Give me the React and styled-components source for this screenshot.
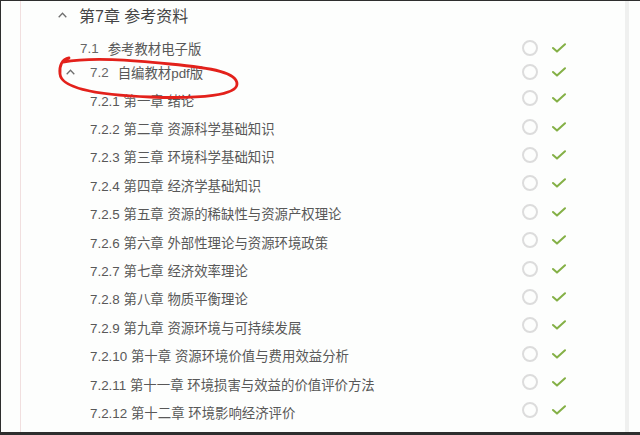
import React from 'react';
import styled, { createGlobalStyle } from 'styled-components';

const GlobalStyle = createGlobalStyle`
  html, body {
    margin: 0;
    padding: 0;
    background: #fdfefd;
  }
  * {
    box-sizing: border-box;
  }
`;

const chapters = [
  ['7.2.1', '第一章', '绪论'],
  ['7.2.2', '第二章', '资源科学基础知识'],
  ['7.2.3', '第三章', '环境科学基础知识'],
  ['7.2.4', '第四章', '经济学基础知识'],
  ['7.2.5', '第五章', '资源的稀缺性与资源产权理论'],
  ['7.2.6', '第六章', '外部性理论与资源环境政策'],
  ['7.2.7', '第七章', '经济效率理论'],
  ['7.2.8', '第八章', '物质平衡理论'],
  ['7.2.9', '第九章', '资源环境与可持续发展'],
  ['7.2.10', '第十章', '资源环境价值与费用效益分析'],
  ['7.2.11', '第十一章', '环境损害与效益的价值评价方法'],
  ['7.2.12', '第十二章', '环境影响经济评价'],
];

const Chevron = () => (
  <ChevronIcon viewBox="0 0 9 6">
    <polyline points="0.7,5.2 4.5,1.2 8.3,5.2" />
  </ChevronIcon>
);

const Status = () => (
  <StatusGroup>
    <Ring />
    <Check viewBox="0 0 14 10">
      <polyline points="1,5 5,8.6 13,1.2" />
    </Check>
  </StatusGroup>
);

export default function App() {
  return (
    <Frame>
      <GlobalStyle />
      <Gutter />
      <Main>
        <Heading>
          <Chevron />
          <span>第7章 参考资料</span>
        </Heading>

        <Row $indent={59} $height={24} $gap={7}>
          <Label>
            <Num $wide>7.1</Num>参考教材电子版
          </Label>
          <Status />
        </Row>

        <Row $indent={45} $height={24}>
          <Label>
            <Chevron />
            <Num $wide>7.2</Num>自编教材pdf版
          </Label>
          <Status />
        </Row>

        {chapters.map(([num, chap, title]) => (
          <Row key={num} $indent={69} $height={28.4}>
            <Label $drop>
              {num} {chap} {title}
            </Label>
            <Status />
          </Row>
        ))}
      </Main>
      <Scrollbar />

      <Scribble viewBox="0 0 640 435">
        <path d="M 69 58 C 62 59, 59 66, 60 74 C 61 87, 92 95, 150 97 C 202 99, 237 95, 237 84 C 237 73, 214 68, 170 64 C 130 60, 92 57, 63 62" />
      </Scribble>
    </Frame>
  );
}

const Frame = styled.div`
  position: relative;
  display: flex;
  width: 640px;
  height: 435px;
  overflow: hidden;
  border-top: 1px solid #2e2e2e;
  border-left: 1px solid #2e2e2e;
  border-bottom: 3px solid #2e2e2e;
  background: #fdfefd;
  font-family: 'Liberation Sans', 'Noto Sans CJK SC', sans-serif;
`;

const Gutter = styled.div`
  width: 20px;
  flex: none;
  border-right: 1px solid #f1dfdf;
`;

const Main = styled.div`
  flex: 1;
  display: flex;
  flex-direction: column;
`;

const Scrollbar = styled.div`
  width: 4px;
  flex: none;
  margin-right: 11px;
  background: #eff0ef;
`;

const Heading = styled.div`
  display: flex;
  align-items: center;
  gap: 12px;
  height: 28px;
  padding-left: 37px;
  font-size: 16px;
  color: #444;
`;

const ChevronIcon = styled.svg`
  width: 9px;
  height: 6px;
  flex: none;
  fill: none;
  stroke: #6f6f6f;
  stroke-width: 1.3;
`;

const Row = styled.div`
  display: flex;
  align-items: center;
  height: ${p => p.$height}px;
  margin-top: ${p => p.$gap || 0}px;
  padding-left: ${p => p.$indent}px;
  padding-right: 59px;
`;

const Label = styled.div`
  flex: 1;
  display: flex;
  align-items: center;
  white-space: pre;
  font-size: 13.4px;
  color: #585858;
  padding-top: ${p => (p.$drop ? 3 : 0)}px;

  ${ChevronIcon} {
    margin-right: 15px;
  }
`;

const Num = styled.span`
  color: #666;
  margin-right: ${p => (p.$wide ? 9 : 4)}px;
`;

const StatusGroup = styled.div`
  display: flex;
  align-items: center;
  gap: 14px;
`;

const Ring = styled.span`
  width: 16px;
  height: 16px;
  border-radius: 50%;
  border: 2px solid #dcdcdc;
`;

const Check = styled.svg`
  width: 14px;
  height: 10px;
  fill: none;
  stroke: #84b046;
  stroke-width: 2;
  stroke-linecap: round;
  stroke-linejoin: round;
`;

const Scribble = styled.svg`
  position: absolute;
  top: -1px;
  left: -1px;
  width: 640px;
  height: 435px;
  pointer-events: none;
  fill: none;
  stroke: #e3211b;
  stroke-width: 2.8;
  stroke-linecap: round;
`;
